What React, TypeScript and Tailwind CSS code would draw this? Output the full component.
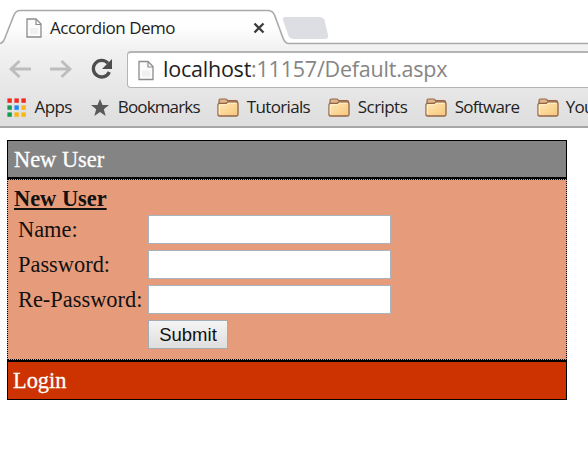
import React from 'react';

function PageIcon({ className }: { className: string }) {
  return (
    <svg viewBox="0 0 16 20" className={className} fill="none">
      <path d="M1 1H10L15 6V19H1Z" fill="#fbfbfb" stroke="#8c8c8c" strokeWidth="1.3" />
      <path d="M10 1V6.5H15" stroke="#8c8c8c" strokeWidth="1.2" />
      <path d="M4 10H12V16H4Z" fill="#f0f0f0" />
    </svg>
  );
}

function FolderIcon() {
  return (
    <svg viewBox="0 0 22 19" className="h-[19px] w-[22px] shrink-0">
      <defs>
        <linearGradient id="folder" x1="0" y1="0" x2="1" y2="1">
          <stop offset="0" stopColor="#ffe9b5" />
          <stop offset="1" stopColor="#f6c67c" />
        </linearGradient>
      </defs>
      <path d="M2 5V2.500Q2 1 3.500 1H8.500Q10 1 10.500 2.500H19Q20.500 2.500 20.500 4V7H2Z" fill="#dfb58a" stroke="#916446" strokeWidth="1.200" />
      <path d="M1 7Q1 5.500 2.500 5.500H9L11 4H19.500Q21 4 21 6V16.500Q21 18 19.500 18H2.500Q1 18 1 16.500Z" fill="url(#folder)" stroke="#916446" strokeWidth="1.300" />
      <path d="M2.200 16V6.600H9.500L11.400 5.200H19.500" fill="none" stroke="#fff3d0" strokeWidth="1" />
    </svg>
  );
}

function AppsIcon() {
  const colors = ['#f02b22', '#f02b22', '#f02b22', '#169b52', '#2188f3', '#fbb515', '#169b52', '#fbb515', '#fbb515'];
  return (
    <svg viewBox="0 0 19 19" className="h-[19px] w-[19px] shrink-0">
      {colors.map((c, i) => (
        <rect key={i} x={(i % 3) * 7 + 0.4} y={Math.floor(i / 3) * 7 + 0.4} width="4.4" height="4.4" fill={c} />
      ))}
    </svg>
  );
}

function TabStrip() {
  return (
    <div className="relative h-[51px]">
      <svg viewBox="0 0 588 51" className="absolute inset-0 h-[51px] w-[588px]">
        <defs>
          <linearGradient id="tab" x1="0" y1="0" x2="0" y2="1">
            <stop offset="0" stopColor="#ffffff" />
            <stop offset="0.45" stopColor="#fdfdfd" />
            <stop offset="1" stopColor="#f0f0f0" />
          </linearGradient>
        </defs>
        <path
          d="M0 43.500Q3 43 4.500 39L14 15Q16 10.500 20 10.500H268Q272.500 10.500 274.500 15L283 38Q285 43.500 289 43.500H588V51H0Z"
          fill="url(#tab)"
        />
        <path
          d="M0 43.500Q3 43 4.500 39L14 15Q16 10.500 20 10.500H268Q272.500 10.500 274.500 15L283 38Q285 43.500 289 43.500H588"
          fill="none"
          stroke="#a9a9a9"
          strokeWidth="1.600"
        />
        <path d="M285 17H319Q323 17 324.500 20L328 35Q328.500 39 325 39H294Q290 39 288.500 36L283 20Q282 17 285 17Z" fill="#dcdee3" />
      </svg>
      <div className="relative flex h-[51px] items-start pl-[26px]">
        <PageIcon className="mt-[18px] h-5 w-4 shrink-0" />
        <span className="ml-2 mt-[17px] w-[203px] text-[17px] leading-[22px] tracking-[-0.48px] text-[#222]">Accordion Demo</span>
        <svg viewBox="0 0 12 12" className="mt-[22px] h-3 w-3 shrink-0" stroke="#3c3c3c" strokeWidth="2.300">
          <path d="M1.500 1.500L10.500 10.500M10.500 1.500L1.500 10.500" />
        </svg>
      </div>
    </div>
  );
}

function Toolbar() {
  return (
    <div className="flex h-[37px] items-start bg-gradient-to-b from-[#f1f1f1] to-[#e7e7e7]">
      <svg viewBox="0 0 127 37" className="h-[37px] w-[127px] shrink-0" fill="none">
        <path d="M31 18H12M19.500 10L11 18L19.500 26" stroke="#bdbdbd" strokeWidth="2.800" />
        <path d="M50 18H69M61.500 10L70 18L61.500 26" stroke="#bdbdbd" strokeWidth="2.800" />
        <path d="M108 12.300A8.300 8.300 0 1 0 109.300 21" stroke="#4d4d4d" strokeWidth="3.300" />
        <path d="M112 8V18H102Z" fill="#4d4d4d" />
      </svg>
      <div className="flex h-[37px] flex-1 items-center rounded-l-[4px] border border-r-0 border-t-2 border-[#b4b4b4] bg-white pl-[10px]">
        <PageIcon className="h-[21px] w-4 shrink-0" />
        <span className="ml-[9px] whitespace-nowrap text-[21.500px] leading-[28px] -mt-[2px] tracking-[-0.22px] text-[#222]">
          localhost<span className="text-[#858585]">:11157/Default.aspx</span>
        </span>
      </div>
    </div>
  );
}

function Bookmarks() {
  return (
    <div className="flex h-[40px] items-center overflow-hidden whitespace-nowrap border-b-2 border-[#a6a6a6] bg-gradient-to-b from-[#e7e7e7] to-[#dedede] pl-[6.500px] text-[17px] leading-[22px] text-[#222]">
      <AppsIcon />
      <span className="ml-[9px] w-[38px] tracking-[-0.600px]">Apps</span>
      <svg viewBox="0 0 18 17" className="ml-[19px] h-[17px] w-[18px] shrink-0">
        <path d="M9 0L11.500 6H18L12.800 10.200L14.700 17L9 13L3.300 17L5.200 10.200L0 6H6.500Z" fill="#595959" />
      </svg>
      <span className="ml-[9px] w-[99px] shrink-0 tracking-[-0.850px]">Bookmarks</span>
      <FolderIcon />
      <span className="ml-[8px] w-[81px] shrink-0 tracking-[-0.650px]">Tutorials</span>
      <FolderIcon />
      <span className="ml-[8px] w-[67px] shrink-0 tracking-[-0.550px]">Scripts</span>
      <FolderIcon />
      <span className="ml-[8px] w-[82px] shrink-0 tracking-[-0.750px]">Software</span>
      <FolderIcon />
      <span className="ml-[7px] shrink-0 tracking-[-0.800px]">You</span>
    </div>
  );
}

function Field({ label, type }: { label: string; type: string }) {
  return (
    <label className="flex h-[35px] items-start">
      <span className="w-[130px] shrink-0 whitespace-nowrap leading-[29px]">{label}</span>
      <input type={type} className="h-[29px] w-[243px] border border-[#aab4bd] bg-white px-1 outline-none" />
    </label>
  );
}

export default function App() {
  return (
    <div className="h-[474px] w-[588px] overflow-hidden bg-white font-['Open_Sans',sans-serif]">
      <TabStrip />
      <Toolbar />
      <Bookmarks />
      <main className="ml-[7px] mt-[12px] w-[560px] font-['Liberation_Serif',serif] text-[22.400px] text-[#111]">
        <div className="h-[39px] border border-b-2 border-black bg-[#848484] pl-[6px] leading-[37px] text-white [-webkit-text-stroke:0.300px_white]">
          New User
        </div>
        <section className="h-[181px] border border-dotted border-black bg-[#e69b7b] pl-[6px] pt-[6px]">
          <div className="h-[29px] font-bold leading-[26px] underline decoration-[1.500px] underline-offset-2">New User</div>
          <div className="pl-[4px]">
            <Field label="Name:" type="text" />
            <Field label="Password:" type="password" />
            <Field label="Re-Password:" type="password" />
            <button className="ml-[130px] block h-[29px] w-[80px] border border-[#a5abb2] bg-gradient-to-b from-[#f5f5f5] to-[#dedede] font-['Liberation_Sans',sans-serif] text-[18.500px] leading-[26px]">
              Submit
            </button>
          </div>
        </section>
        <div className="h-[40px] border border-t-2 border-black bg-[#cc3300] pl-[5px] leading-[37px] text-white [-webkit-text-stroke:0.300px_white]">
          Login
        </div>
      </main>
    </div>
  );
}
